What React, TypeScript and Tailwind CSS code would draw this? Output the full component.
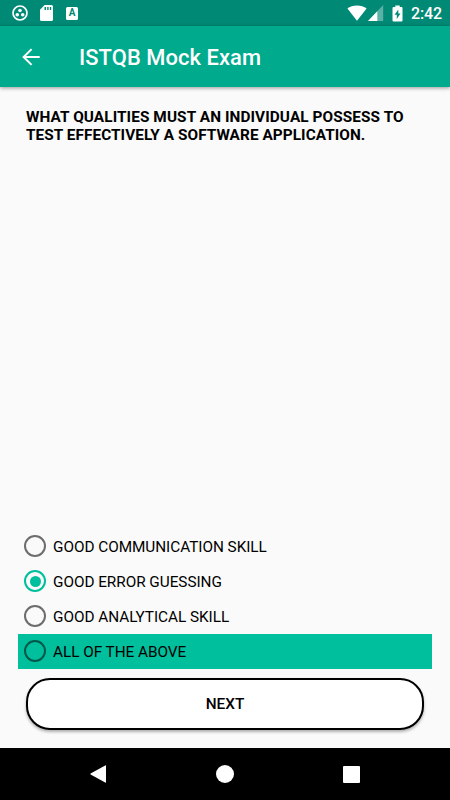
import React from 'react';

function StatusBar() {
  return (
    <div className="flex h-[26px] shrink-0 items-center justify-between bg-[#008975] pl-[12px] pr-[9px] text-white">
      <div className="flex items-center">
        <svg width="16" height="16" viewBox="0 0 16 16" fill="currentColor">
          <circle cx="8" cy="8" r="7" fill="none" stroke="currentColor" strokeWidth="1.7" />
          <circle cx="8" cy="5.5" r="1.8" />
          <circle cx="5.3" cy="9.7" r="1.8" />
          <circle cx="10.7" cy="9.7" r="1.8" />
        </svg>
        <svg className="ml-[12px]" width="13" height="16" viewBox="0 0 13 16">
          <path
            fill="currentColor"
            fillRule="evenodd"
            d="M4.6 0H11.4Q13 0 13 1.6V14.4Q13 16 11.4 16H1.6Q0 16 0 14.4V4.8ZM4.5 2V5H6V2ZM7.2 2V5H8.6V2ZM9.8 2V5H11.2V2Z"
          />
        </svg>
        <span className="ml-[13px] flex h-[13px] w-[12px] items-center justify-center rounded-[1.5px] bg-white text-[10px] font-bold leading-none text-[#008975]">
          A
        </span>
      </div>
      <div className="flex items-center">
        <svg width="20" height="16" viewBox="0 0 20 16">
          <path fill="currentColor" d="M10 15.7.4 3.6C3 1.5 6.2.4 10 .4s7 1.1 9.6 3.2Z" />
        </svg>
        <svg className="ml-[1px]" width="16" height="16" viewBox="0 0 16 16">
          <path fill="currentColor" fillOpacity=".35" d="M15.2 0V16H0Z" />
          <path fill="currentColor" d="M9.3 6.2V16H0Z" />
        </svg>
        <svg className="ml-[8px]" width="11" height="17" viewBox="0 0 11 17">
          <path
            fill="currentColor"
            fillRule="evenodd"
            d="M3.3.5H7.7V2H9.5Q10.5 2 10.5 3V15.5Q10.5 16.5 9.5 16.5H1.5Q.5 16.5.5 15.5V3Q.5 2 1.5 2H3.3ZM6.3 4.4 2.6 9.8H4.8V14L8.5 8.5H6.3Z"
          />
        </svg>
        <span className="ml-[8px] mt-[2px] w-[30px] whitespace-nowrap text-[16px] font-medium leading-none tracking-[-0.15px]">
          2:42
        </span>
      </div>
    </div>
  );
}

function AppBar() {
  return (
    <header className="z-10 flex h-[61px] shrink-0 items-center bg-[#00aa8d] pl-[22px] text-white shadow-[0_1px_4px_rgba(0,0,0,0.4)]">
      <svg width="18" height="18" viewBox="0 0 18 18" fill="none" stroke="currentColor" strokeWidth="2">
        <path d="M17.7 9H2M9.6 1.1 1.6 9l8 7.9" />
      </svg>
      <h1 className="ml-[39px] mt-[3px] whitespace-nowrap text-[21.9px] font-medium leading-[26px] tracking-[0.08px]">
        ISTQB Mock Exam
      </h1>
    </header>
  );
}

type OptionProps = { label: string; selected?: boolean; highlighted?: boolean };

function Option({ label, selected, highlighted }: OptionProps) {
  const ring = selected ? 'border-[#00bf9c]' : highlighted ? 'border-[#00584a]' : 'border-[#6d6d6d]';
  return (
    <div
      role="radio"
      aria-checked={!!selected}
      className={`flex h-[35px] items-center pl-[6px] ${highlighted ? 'bg-[#00bf9c]' : ''}`}
    >
      <span className={`mb-px flex size-[22px] items-center justify-center rounded-full border-2 ${ring}`}>
        {selected && <span className="size-[11px] rounded-full bg-[#00bf9c]" />}
      </span>
      <span className="ml-[7px] whitespace-nowrap text-[15.33px] leading-[18px] tracking-[-0.04px] text-black">
        {label}
      </span>
    </div>
  );
}

function NavBar() {
  return (
    <nav className="flex h-[52px] shrink-0 items-center justify-between bg-black pl-[90px] pr-[90px]">
      <svg width="16" height="18" viewBox="0 0 16 18">
        <path fill="#fff" d="M16 .9V17.1q0 .8-.8.4L.6 9.6Q0 9 .6 8.4L15.2.5q.8-.4.8.4Z" />
      </svg>
      <span className="size-[18px] rounded-full bg-white" />
      <span className="size-[17px] rounded-[1px] bg-white" />
    </nav>
  );
}

export default function App() {
  return (
    <div className="flex h-[800px] w-[450px] flex-col overflow-hidden bg-[#fafafa] font-[Roboto,sans-serif]">
      <StatusBar />
      <AppBar />
      <main className="flex flex-1 flex-col">
        <p className="ml-[26px] mt-[21px] whitespace-nowrap text-[15.33px] font-bold leading-[18px] tracking-[0.1px] text-black">
          WHAT QUALITIES MUST AN INDIVIDUAL POSSESS TO
          <br />
          <span className="tracking-[0.07px]">TEST EFFECTIVELY A SOFTWARE APPLICATION.</span>
        </p>
        <div role="radiogroup" className="ml-[18px] mr-[18px] mt-auto">
          <Option label="GOOD COMMUNICATION SKILL" />
          <Option label="GOOD ERROR GUESSING" selected />
          <Option label="GOOD ANALYTICAL SKILL" />
          <Option label="ALL OF THE ABOVE" highlighted />
        </div>
        <button className="mb-[18px] ml-[26px] mr-[26px] mt-[9px] h-[52px] rounded-[24px] border-2 border-black bg-white text-[15.33px] font-medium text-black shadow-[0_2px_3px_rgba(0,0,0,0.3)]">
          NEXT
        </button>
      </main>
      <NavBar />
    </div>
  );
}
